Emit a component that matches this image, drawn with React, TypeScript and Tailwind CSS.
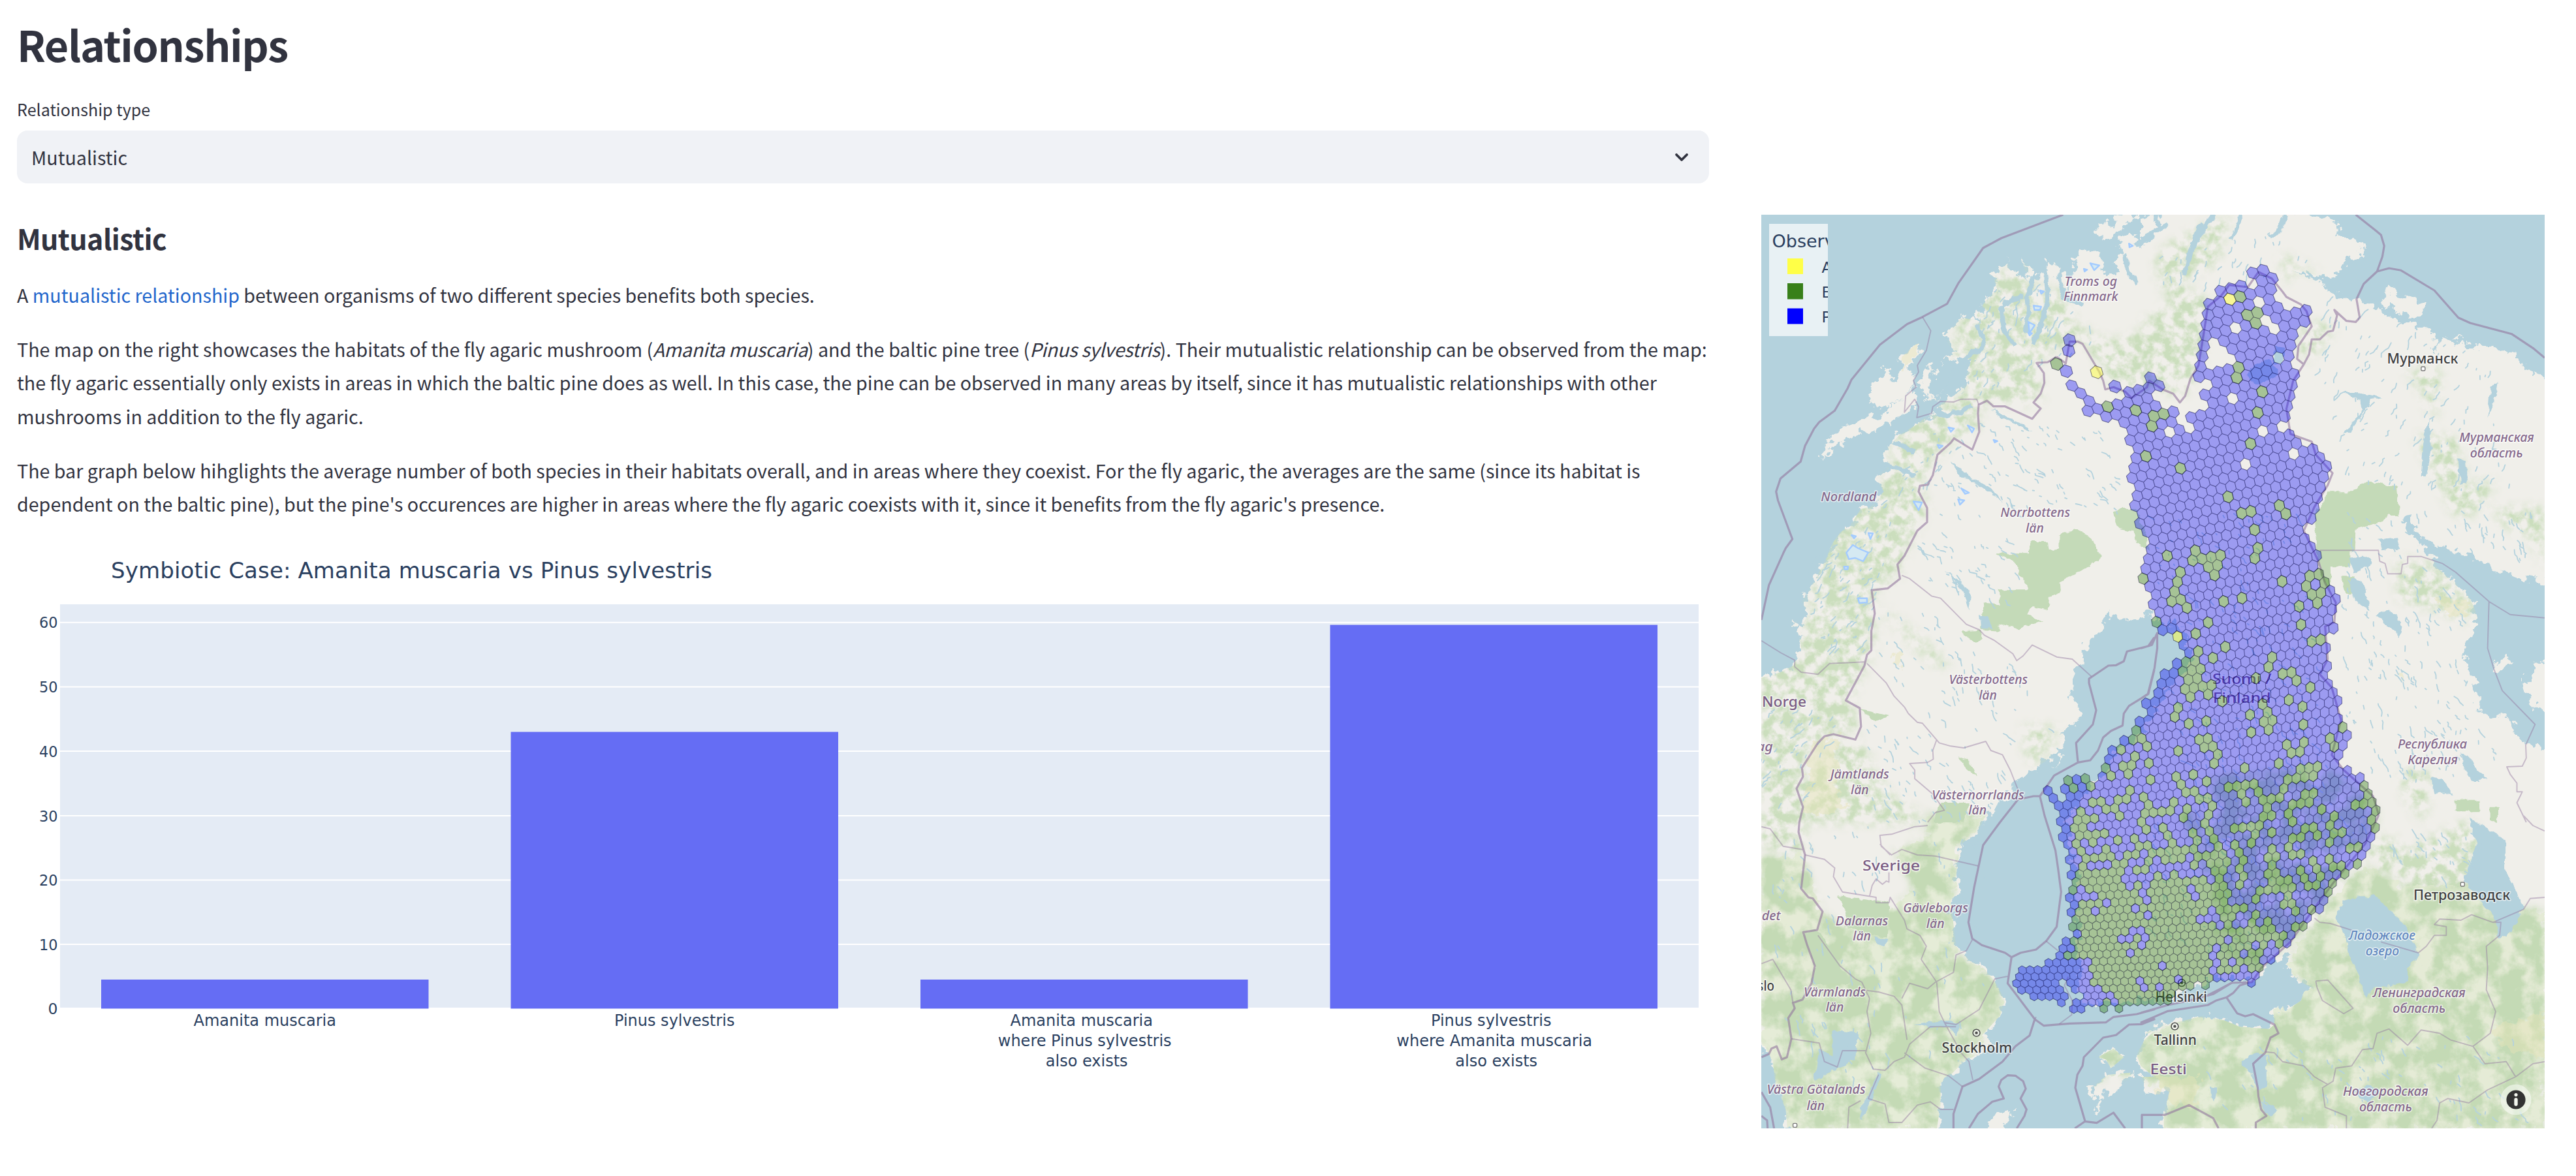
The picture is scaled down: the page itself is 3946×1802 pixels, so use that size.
import React from "react";

/* ---------- Map geometry helpers ---------- */

type Pt = [number, number];

// The map is digitised on six sheets; every sheet has its own origin and scale.
const SHEETS: Record<string, [number, number, number]> = {
  A: [2.529, -18, -19],
  B: [2.45, 582, -19],
  C: [2.529, -18, 451],
  D: [2.45, 582, 451],
  E: [2.529, -18, 921],
  F: [2.45, 582, 921],
};

const at = (sheet: string, x: number, y: number): Pt => {
  const [s, ox, oy] = SHEETS[sheet];
  return [x / s + ox, y / 3 + oy];
};

// "A 10,20 30,40 B 5,6" -> points in map space
function trace(src: string): Pt[] {
  const out: Pt[] = [];
  let sheet = "A";
  for (const t of src.trim().split(/\s+/)) {
    if (SHEETS[t]) sheet = t;
    else {
      const [x, y] = t.split(",").map(Number);
      out.push(at(sheet, x, y));
    }
  }
  return out;
}

const line = (src: string) =>
  "M" + trace(src).map((p) => p[0].toFixed(1) + " " + p[1].toFixed(1)).join("L");
const area = (src: string) => line(src) + "Z";

function inside(p: Pt, poly: Pt[]) {
  let r = false;
  for (let i = 0, j = poly.length - 1; i < poly.length; j = i++) {
    const [xi, yi] = poly[i];
    const [xj, yj] = poly[j];
    if (yi > p[1] !== yj > p[1] && p[0] < ((xj - xi) * (p[1] - yi)) / (yj - yi) + xi) r = !r;
  }
  return r;
}

function rng(seed: number) {
  let s = seed;
  return () => {
    s = (s * 1664525 + 1013904223) % 4294967296;
    return s / 4294967296;
  };
}

/* ---------- Coastlines ---------- */

const MAINLAND = area(`B 630,40 630,57 700,80 750,110 740,150 790,150 830,200 830,250 780,265 750,300 730,340 670,345 640,330 560,305 600,330 650,355 690,380 700,410 740,430 770,420 800,445 850,460 900,490 910,520 950,530 1000,560 1060,575 1098,600 1100,690 1112,690 1110,640 1140,640 1200,655 1300,665 1380,680 1430,740 1480,790 1540,830
D 1560,345 1514,335 1400,310 1320,280 1250,220 1170,190 1110,180 1050,120 1000,40 975,30 1000,100 1040,150 1090,210 1110,270 1160,320 1220,380 1245,440 1265,500 1245,560 1215,620 1220,700 1245,760 1260,860 1255,910 1310,960 1370,950 1400,1000 1420,1060 1514,1100 1560,1110
F 1560,1480 85,1480 85,1370 105,1270 80,1250 70,1280 20,1280 0,1200 E 1568,1200 1515,1150 1500,1100 1530,1030 1568,990
F 0,1010 60,960 130,950 230,920 310,940 370,970 480,980 500,960 495,890 530,870 540,900 600,850 610,810 640,790 590,760 545,700 550,640 490,660 450,720 420,760 300,740 200,780 100,830 0,840
E 1420,860 1300,860 1280,780 1270,740 1290,700 1270,620 1280,540 1260,450 1280,300 1260,200 1240,100 1230,0
C 1230,1430 1260,1380 1310,1280 1370,1230 1410,1130 1490,1060 1568,950 D 60,920 120,800 190,700 180,620 150,540 60,500 20,480
C 1560,480 1480,500 1440,510 1380,480 1370,560 1300,610 1290,700 1260,760 1240,840 1280,920 1260,980 1220,1020 1200,1100 1160,1150 1080,1210 1030,1240 1000,1320 930,1400
E 910,10 880,80 820,130 810,200 800,280 810,350 780,400 790,500 800,600 860,670 900,690 950,760 990,850 970,920 900,1010 950,1040 880,1100 830,1130 780,1190 740,1230 740,1330 720,1480 150,1480 140,1350 100,1230 90,1130 60,1060 0,1040
C 0,780 46,775 100,760 170,720 200,640 190,560 230,480 200,430 240,350 270,290 300,220 320,160 350,110 400,60 430,0
A 470,1400 520,1330 490,1270 540,1210 520,1150 580,1070 650,1020 680,990 750,960 730,940 760,910 800,880 830,840 860,720 740,730 790,690 750,610 780,580 820,530 870,540 900,560 880,520 910,460 960,400 940,330 1000,270 1010,310 1050,340 1090,345 1120,340 1150,340 1200,340 1240,330 1300,310 1370,330 1440,320 1400,270 1450,250 1490,200 1530,190 1568,140 B 0,130 60,120 80,60 80,40`);

const ISLANDS = [
  "A 278,1190 300,1120 360,1030 440,1000 520,970 560,930 600,900 640,850 650,920 600,980 540,1010 490,1050 430,1060 380,1080 330,1120",
  "A 460,900 480,840 540,760 550,830 590,780 630,770 640,840 600,900 540,940 490,940",
  "A 660,635 655,700 620,770 580,790 590,710",
  "A 670,770 705,740 720,790 690,880 720,900 760,870 700,920 660,850",
  "A 1340,100 1400,110 1420,65 1450,57 1500,57 1450,110 1400,160 1350,160",
  "A 1525,65 1568,60 1568,150 1535,140",
  "A 1430,180 1480,145 1520,180 1500,240 1460,250",
  "A 1250,270 1300,215 1370,260 1360,330 1270,320",
  "A 1150,280 1195,275 1195,340 1150,345",
  "A 1050,260 1110,320 1090,345 1070,320",
  "B 0,70 40,62 60,110 40,170 0,150",
  "B 905,440 930,385 1000,440 1060,470 1055,530 1010,530 950,500 930,480 910,480",
  "B 1155,625 1175,605 1205,630",
  "D 1540,690 1480,700 1470,750 1440,780 1450,850 1480,900 1514,950 1540,960",
  "D 1330,700 1390,690 1360,750 1330,740",
  "E 1320,1250 1390,1190 1490,1180 1430,1260 1335,1300",
  "E 1350,1110 1410,1070 1450,1110 1400,1160 1380,1120",
  "E 1340,1360 1350,1300 1365,1310 1350,1370",
  "E 910,1480 950,1380 1025,1355 970,1480",
  "C 150,530 180,515 190,540 165,550",
  "C 1195,1180 1200,1120 1212,1130",
].map(area).join("");

const LAKES = [
  "E 320,990 420,1000 410,1120 340,1160 250,1220 270,1070 320,1110",
  "E 500,1180 515,1185 470,1310 435,1400 430,1340 465,1270",
  "F 760,390 820,370 880,370 940,440 1000,520 1040,640 1000,700 1005,760 930,780 870,790 840,840 820,740 780,640 770,560 730,470",
  "F 1230,10 1300,60 1365,110 1365,250 1400,330 1435,420 1390,530 1340,570 1330,480 1270,380 1210,300 1240,200 1260,130",
  "F 375,1130 430,1085 470,1100 470,1240 440,1260 410,1180",
  "F 450,1310 510,1350 490,1385 465,1360",
  "F 800,1260 860,1240 900,1260 860,1310 820,1300",
  "F 260,1245 285,1250 275,1320 262,1290",
  "D 880,490 930,460 980,530 970,590 910,520",
  "D 790,320 830,330 850,430 860,470 810,430 780,370",
  "D 1090,1230 1130,1240 1170,1310 1100,1310",
  "D 1200,1120 1230,1130 1260,1200 1300,1240 1240,1250 1205,1170",
  "B 800,870 880,890 910,900 860,910 840,960 780,1060 760,1060 830,960 820,910 760,870",
  "B 1060,1090 1080,1000 1090,1130 1070,1260 1050,1260",
  "B 1190,1180 1220,1190 1225,1290 1195,1290",
  "B 1310,850 1340,820 1330,890 1300,990 1305,900",
  "B 500,660 540,665 530,750 495,740",
  "B 410,760 480,720 520,790 440,840 395,800",
  "C 760,280 830,350 860,400 850,460 830,380",
  "A 780,1190 850,1260 930,1310 980,1380 900,1310 810,1250",
  "A 940,950 1000,990 1080,1030 1090,1050 1030,1020 970,990",
  "C 890,490 930,500 940,550 900,550",
  "D 780,230 850,220 870,250 800,290",
  "D 890,140 960,130 970,180 900,190",
  "E 480,560 540,570 520,600 490,590",
  "E 640,960 760,940 820,960 800,1010 770,970 690,970",
].map(area).join("");

const FJORDS = [
  "A 1100,340 1075,440 1080,520 1070,600",
  "A 1150,330 1155,450 1130,560 1100,650",
  "A 975,470 985,590 1030,660",
  "A 720,960 760,985 820,960 860,930",
  "A 760,820 860,690 900,680",
  "A 980,470 1060,430",
  "A 880,560 910,640 890,690",
  "A 1200,330 1220,440 1290,470",
  "A 1450,240 1470,330 1500,370",
  "B 270,60 220,150 190,210 165,320",
  "B 375,60 340,170",
  "B 540,60 520,130 480,160",
  "B 225,100 190,200 160,330",
  "A 1490,200 1568,150",
  "B 100,100 0,170",
  "A 500,1200 600,1230 640,1260",
  "A 560,1100 640,1150",
].map(line).join("");

const FORESTS = [
  "C 955,205 1085,205 1085,150 1155,150 1160,190 1200,185 1200,115 1270,95 1320,130 1365,215 1310,270 1200,335 1205,385 1160,405 1158,465 1100,450 1070,480 1140,520 1040,550 960,530 975,560 895,555 905,430 970,440 965,370 1075,370 1050,300 1030,250",
  "C 820,565 895,560 900,590 880,615 830,580",
  "C 810,1130 850,1160 880,1225 840,1200",
  "C 740,1350 850,1350 830,1440 710,1440",
  "C 430,920 540,950 490,975",
  "C 1408,20 1430,0 1500,0 1540,130 1545,190 1500,150 1490,100 1430,90",
  "B 700,1330 790,1330 850,1280 960,1310 970,1440 660,1440",
  "D 650,0 960,0 900,60 805,90 800,190 785,195 785,265 710,265 712,380 690,340 660,240",
  "D 750,310 800,310 800,380 770,390",
  "E 212,535 262,525 310,600 350,700 410,770 240,775 253,690",
  "E 345,370 540,400 530,560 440,540 370,510 380,440",
  "D 1180,1340 1270,1340 1270,1390 1180,1390",
  "D 1310,1370 1340,1370 1340,1435 1310,1435",
].map(area).join("");

// Mottled woodland, light density
const WOODS_LIGHT = [
  "A 950,340 1050,300 1100,400 1200,400 1230,480 1260,560 1380,640 1568,600 1568,860 1430,860 1330,700 1270,620 1150,700 1110,740 1130,920 900,920 880,1050 800,1080 700,1200 660,1300 690,1420 420,1440 560,1200 540,1100 700,960 860,860 780,680 820,540",
  "C 250,0 680,0 600,200 570,310 480,370 480,640 420,800 380,880 430,1020 300,1030 200,1180 200,1440 46,1440 46,780 190,650 260,300",
  "B 60,250 130,180 250,100 330,60 280,280 180,330 120,480 60,330",
  "B 150,400 250,440 230,700 160,880 60,860 0,860 0,560 100,480",
  "B 530,240 600,290 680,320 570,310 540,380",
  "B 620,560 710,560 720,590 620,730 590,680",
  "B 1030,1080 1180,1080 1220,1300 1330,1280 1240,1440 1180,1440",
  "B 990,770 1120,770 1100,1000 1050,860",
  "C 500,450 620,550 780,720 730,720 640,630",
  "C 340,1060 430,1080 530,1300 700,1440 193,1440 190,1280",
  "C 1060,1000 1200,1010 1130,1160 1080,1160",
  "D 960,230 1100,260 1240,420 1240,520 1130,470 970,420",
  "D 980,1210 1080,1190 1060,1440 990,1330",
  "D 1320,0 1514,0 1514,260 1460,130 1350,60",
  "E 46,0 200,0 215,180 46,140",
  "F 850,100 960,110 1000,250 880,260",
  "F 960,180 1240,20 1300,330 1240,400 980,400",
].map(area).join("");

// Mottled woodland, heavy density
const WOODS_HEAVY = [
  "E 690,0 920,0 800,140 800,280 780,400 800,640 960,760 980,920 900,1010 860,1110 740,1230 730,1437 150,1437 46,1050 46,200 200,180 280,440 360,520 560,420 640,330 560,160 690,100",
  "E 1320,1250 1390,1190 1480,1190 1450,1110 1410,1070 1350,1110 1390,1160",
  "F 0,1010 230,920 480,980 500,890 640,790 545,700 640,500 780,300 850,240 1000,330 1210,320 1300,400 1514,440 1514,1437 85,1437 100,1260 0,1200",
  "E 1500,1100 1568,1000 1568,1190",
].map(area).join("");

// Woodland below the observation grid
const WOODS_FINLAND = [
  "D 250,1230 700,1180 880,1380 870,1440 300,1440",
  "F 150,0 890,0 720,340 560,580 440,700 300,600 250,300",
].map(area).join("");

const FARMLAND = [
  "C 240,1070 345,1040 345,1350 400,1360 310,1400 205,1390",
  "C 550,670 585,670 585,730 555,710",
  "A 590,700 650,640 650,700 590,790",
  "D 960,740 990,750 980,800",
  "D 1120,400 1230,430 1230,510 1150,490",
  "F 1300,980 1514,900 1514,1120 1400,1090",
  "F 60,1200 220,1200 200,1340 60,1300",
].map(area).join("");

const GLACIERS = [
  "C 375,200 400,165 420,180 460,200 440,240 410,225 385,230",
  "C 395,120 412,125 405,135", "C 460,110 478,112 468,138", "C 420,410 455,410 455,430 425,432",
  "C 366,265 382,265 380,277 368,277",
  "A 1080,550 1105,565 1085,600", "A 1100,475 1130,480 1125,495 1104,495", "A 1320,280 1355,290 1335,312",
  "A 1470,190 1485,200 1472,207", "A 1295,306 1308,310 1298,318", "A 635,1375 668,1380 655,1415",
  "A 845,1025 870,1040 862,1058", "A 770,1035 792,1040 780,1055", "A 808,1365 832,1370 815,1390",
  "A 820,1315 850,1335 835,1340", "A 728,1115 748,1120 735,1130", "A 1125,405 1140,410 1130,420",
  "A 1080,598 1094,602 1085,612", "A 945,1092 960,1098 950,1104",
].map(area).join("");

const BORDERS_WIDE = [
  "A 1215,57 1080,118 975,165 905,210 810,370 765,467 670,527 610,560 505,655 395,815 380,855 330,958 270,1010 250,1040 215,1120 198,1192 120,1270 103,1330 110,1370 132,1440 C 166,138 140,180 130,205 75,350 46,510",
  "A 1190,710 1155,735 1112,738 1140,785 1142,830 1128,880 1100,920 1128,948 1095,995 990,938 945,938 920,912 888,930 885,970 890,1055 863,1137 792,1085 780,1105 728,1160 710,1255 690,1298 660,1303 655,1330 688,1405 C 688,60 650,100 600,215 573,255 583,320 535,365 473,373 485,480 472,560 472,650 455,670 445,720 373,880 427,915 432,1000 410,1060 325,1035 290,1045 265,1075 203,1190 207,1230 182,1285 207,1370 193,1440 E 190,75 215,180 200,335 228,375 245,380 283,440 262,525 208,535 222,590 253,690 240,770 205,845 168,860 175,885 150,930 162,1025 145,1110 125,1120 105,1060 85,1070 75,1095 46,1110",
  "A 1190,710 1225,740 1240,640 1270,640 1290,650 1355,780 1370,820 1378,860 1410,850 1455,870 1480,900 1540,850 B 30,820 80,860 120,880 145,920 165,890 185,810 215,750 235,600 250,480 300,430 330,380 400,390 440,320 490,350 530,410 545,435 600,470 620,500 640,570 590,660 585,720 610,745 630,700 640,630 670,630 700,595 720,590 735,520 725,495 770,545 805,550 820,530 808,445 835,375 885,318 905,250 912,200 900,150 880,130 805,57",
  "B 885,318 930,303 975,313 1100,405 1190,530 1235,555 1390,605 1470,670 1514,715",
  "B 610,745 570,820 545,950 560,1065 640,1100 655,1160 718,1245 700,1300 650,1400 D 610,100 665,240 690,340 730,430 725,520 690,540 700,690 670,760 715,820 750,970 715,1130 760,1200 870,1320 890,1400 F 890,0 840,130 720,310 640,440 560,580 450,700 415,765 340,768 270,820 180,850",
  "C 1568,590 1545,630 1462,655 1450,700 1420,718 1390,720 1315,780 1315,800 1343,925 1330,990 1265,1075 1272,1165 1180,1225 1125,1320 1100,1320 1040,1335 970,1440 E 905,135 870,330 848,490 863,565 900,595 990,630 1015,650 1050,630 1110,615 1150,575 1190,510 1207,350 1195,240 1185,160 1143,0 C 1125,1320",
  "C 1272,1165 1320,1155 1350,1110 1370,1050 1400,1020 1445,995 1450,940 1470,905 1545,850 1568,740",
  "D 0,870 25,850 50,730 60,640 60,570 40,625 0,640",
  "E 1015,650 1000,770 1105,935 1140,965 1240,955 1380,950 1410,925 1500,912 1568,890 F 0,905 100,870 200,845",
  "E 1105,935 1085,1010 1030,1060 980,1130 890,1210 825,1245 790,1370 790,1437",
  "E 850,1437 885,1370 940,1315 985,1300 965,1245 975,1215 1000,1193 1030,1195 1060,1220 1070,1255 1050,1300 1073,1350 1065,1380 1035,1437",
  "E 1260,1437 1300,1405 1345,1412 1410,1365 1455,1437",
  "E 1300,1405 1262,1250 1270,1190 1290,1150 1295,1110 1370,1020 1420,1008 1470,960 1520,958 1568,935 F 0,950 100,898 250,870 280,850 320,835 360,908 390,922 420,912 500,960 515,1000 485,1020 465,1090 420,1140 437,1250 440,1290 450,1350 470,1380 430,1410 430,1437",
  "F 0,1375 90,1375 120,1360 180,1330 240,1370 270,1390 290,1437",
  "F 250,825 290,800 340,768", "F 320,835 345,815 370,780 410,765",
  "E 46,1270 80,1340 95,1437", "E 46,1380 68,1400 70,1437",
  "E 1520,1437 1520,1375 1568,1375",
].map(line).join("");

const BORDERS_THIN = [
  "A 670,527 702,590 685,680 650,750 655,780 635,820 645,850 605,890 600,965 640,905 655,940 648,990 705,970 710,940 740,915 790,918 820,905 880,905 888,930",
  "C 46,605 120,660 175,695 175,725 200,750 265,760 310,710 445,703",
  "C 590,305 620,320 705,400 740,410 840,530 890,555 910,580 950,605 1020,665 1035,697 1060,675 1095,625 1190,680 1250,690 1325,770",
  "C 455,710 505,770 530,800 560,860 600,910 615,940 650,980 670,985 735,1075 780,1090 830,1098 915,1068 935,1110 980,1130 1010,1200 1040,1290",
  "C 725,1060 710,1110 712,1150 690,1165 620,1170 640,1200 640,1240 710,1310 755,1385 720,1395 690,1440",
  "E 690,45 640,50 550,85 505,90 510,140 550,180 590,155 650,180 720,185 810,210 885,230",
  "E 215,180 290,200 330,240 325,280 360,350 490,375 490,400 540,400 545,375 600,480 610,520 660,550 685,600 665,660 725,765 735,900 755,950 820,1090 850,1130 865,1215",
  "E 465,370 475,320 490,290 515,315 530,300 540,305 540,260",
  "E 46,50 80,60 130,140 205,155",
  "E 545,180 505,130",
  "E 265,550 350,690 410,750 435,765 465,840 455,900 470,1000 450,1090 480,1165 525,1170 560,1130 600,1110 620,1050 700,970 800,970",
  "E 435,800 500,810 560,830 590,870 610,1030",
  "E 590,840 620,770 690,795 720,765 790,720 800,640 840,620 863,570",
  "E 162,1025 270,1045 290,1130 340,1155 360,1080 450,1080",
  "E 600,1090 680,1160 770,1195 825,1245",
  "E 500,1190 460,1300 525,1325 540,1410 590,1410 650,1330 700,1315 740,1350 790,1350",
  "E 380,1437 385,1340 430,1310", "E 755,950 800,960 890,890 950,750 1000,738",
  "E 46,680 90,660 130,740 160,800 168,860",
  "E 1148,575 1195,620", "E 1105,935 1110,925", "E 1200,957 1248,915 1250,850 1220,780 1235,740",
  "F 650,470 670,490 710,495 800,530", "F 900,580 1040,630 1070,600 1100,550 1145,550 1145,510 1100,500 1120,475 1200,480 1240,455 1320,490 1435,430 1460,380 1514,375",
  "F 1320,490 1350,490 1345,550 1295,600 1300,700 1295,800 1330,900 1310,1000 1245,1060 1160,1030 1120,1000 1050,985 1000,1055 930,980 885,1000 870,1070 830,1075 790,1150 730,1160 720,1220 680,1250 690,1340 770,1380 770,1437",
  "F 465,1085 500,1090 530,1130 610,1150 650,1200 700,1235",
  "F 1245,1060 1290,1140 1370,1130 1405,1200 1370,1220 1300,1260 1230,1320 1150,1300 1120,1320 1110,1400 1090,1437",
  "F 1405,1200 1470,1140 1514,1130",
  "F 655,760 700,755 795,885 760,910 680,850 660,790 655,760",
  "D 670,190 890,190 895,240 915,250 925,298 975,298 980,255 1000,250 1000,218 1050,218 1130,250 1180,290 1305,425 1385,485 1514,500",
  "D 1305,425 1300,640 1325,740 1355,835 1478,990 1443,1085 1445,1145 1430,1182 1372,1185 1385,1220 1410,1260 1410,1300 1430,1300 1410,1350 1445,1440",
  "F 1435,0 1470,45 1514,70",
].map(line).join("");

/* ---------- Small lakes scattered over the land ---------- */

const LAKE_ZONES: [string, number, number][] = [
  ["A 900,1000 1400,1050 1450,1440 700,1440 720,1200", 110, 0.75],
  ["C 620,80 1000,100 1040,300 960,500 700,350", 70, 0.8],
  ["C 500,400 850,540 1000,700 1180,1000 1000,1100 700,1000 480,650", 120, 1],
  ["C 430,980 700,1000 1000,1200 900,1440 500,1440 400,1100", 80, 1.05],
  ["C 250,150 560,50 440,700 250,600", 110, 2.3],
  ["A 700,1050 860,1150 600,1400 500,1400", 60, 2.2],
  ["A 950,380 1300,350 1350,650 900,900 760,820", 100, 2],
  ["B 700,400 1060,600 1300,700 1400,1400 700,1300 650,800", 190, 2.1],
  ["B 0,250 500,100 700,260 500,330 100,440", 60, 1.9],
  ["D 760,10 960,10 1200,420 1240,900 1400,1200 900,1300 760,950 750,400", 260, 1.15],
  ["D 1000,0 1500,0 1500,260 1200,180", 60, 1.2],
  ["D 20,20 600,20 700,1100 850,1400 200,1440 100,1000", 260, 0.9],
  ["C 46,900 400,900 200,1400 46,1400", 50, 2.3],
  ["E 60,50 900,50 950,900 400,1300 100,1000", 130, 1.3],
  ["F 950,50 1300,50 1250,400 850,150", 60, 1],
  ["F 0,0 850,0 450,650 0,600", 200, 0.9],
  ["F 150,1000 1500,1000 1500,1400 300,1400", 70, 1.1],
];

const SMALL_LAKES = (() => {
  const r = rng(41);
  let d = "";
  for (const [src, n, ang] of LAKE_ZONES) {
    const poly = trace(src);
    const xs = poly.map((p) => p[0]);
    const ys = poly.map((p) => p[1]);
    const x0 = Math.min(...xs), x1 = Math.max(...xs), y0 = Math.min(...ys), y1 = Math.max(...ys);
    for (let k = 0; k < n; k++) {
      let x = x0 + r() * (x1 - x0);
      let y = y0 + r() * (y1 - y0);
      const steps = 1 + Math.floor(r() * r() * 6);
      if (!inside([x, y], poly)) continue;
      d += `M${x.toFixed(1)} ${y.toFixed(1)}`;
      for (let q = 0; q < steps; q++) {
        const a = ang + (r() - 0.5) * 1.3;
        const l = 2 + r() * 4;
        x += Math.cos(a) * l;
        y += Math.sin(a) * l;
        d += `L${x.toFixed(1)} ${y.toFixed(1)}`;
      }
    }
  }
  return d;
})();

/* ---------- Hexagon grid of observations ---------- */

const RANGE = trace(`B 400,315 425,300 495,300 495,350 485,380 520,400 515,445 430,455 420,480 450,495 515,475 545,500 550,530 575,520 580,480 605,455 630,490 615,560 570,565 565,600 595,625 580,700 575,740 607,760 595,810 580,850 575,900 560,960 545,1000 525,1015 525,1050 575,1045 600,1110 640,1120 660,1165 700,1160 718,1185 700,1230 715,1260 695,1320 675,1370 660,1400 655,1440
D 640,50 620,100 645,150 678,200 665,260 690,320 712,370 730,410 747,450 730,500 747,545 720,570 690,590 712,620 700,660 710,710 700,750 700,790 730,820 745,870 730,910 745,955 795,965 795,990 775,1010 795,1060 775,1100 755,1150 745,1190 790,1200 795,1230 838,1235 840,1270 870,1300 885,1350 905,1400 885,1440
F 905,70 870,90 850,130 835,160 850,190 820,210 800,240 785,270 740,300 720,350 705,390 690,430 645,460 630,500 600,520 570,580 515,620 510,660 470,690 450,740 440,775 415,785 400,750 300,757 270,775 265,800 240,800 230,770 210,775 200,805 120,815 115,850 60,860 10,875
E 1568,870 1550,865 1420,895 1400,860 1380,890 1345,890 1340,865 1310,865 1310,890 1250,890 1250,860 1290,850 1290,835 1235,800 1230,770 1255,750 1240,735 1215,760 1205,800 1230,830 1230,860 1200,860 1195,835 1085,835 1075,810 1035,805 1018,765 1030,720 1050,685 1140,685 1170,655 1190,625 1205,580 1215,545 1245,545 1240,510 1230,490 1245,450 1250,410 1235,390 1245,340 1255,300 1240,270 1250,240 1230,210 1235,180 1225,130 1205,100 1215,60 1198,30
C 1200,1430 1205,1390 1180,1350 1150,1310 1155,1285 1185,1300 1210,1350 1235,1350 1235,1320 1212,1290 1225,1235 1300,1210 1340,1245 1350,1200 1370,1170 1385,1115 1415,1105 1420,1065 1475,1055 1495,1010 1510,990 1485,950 1500,930 1530,955 1545,920 1535,890 1550,880 1568,890
D 20,880 45,890 70,870 60,840 80,790 90,750 110,740 100,715 120,700 150,720 150,660 130,620 125,560 90,555 55,560 40,545 60,510 40,460 15,420 30,385 10,345 0,310
C 1510,300 1530,250 1540,200 1535,150 1510,100 1510,30 A 1500,1430 1480,1390 1500,1340 1475,1290 1490,1240 1460,1210 1480,1170 1470,1120 1440,1090 1450,1050 1415,1010 1380,985 1350,965 1300,970 1320,945 1310,910 1275,890 1235,850 1240,830 1270,835 1310,870 1350,910 1385,920 1440,900 1470,890 1470,850 1510,850 1520,790 1560,790
B 45,800 80,840 60,870 30,870 30,900 60,920 65,945 100,930 135,945 130,1000 160,1030 165,1045 200,1035 195,1010 165,990 170,960 225,945 255,940 250,900 220,885 235,855 275,850 270,820 230,825 195,800 205,740 220,690 225,630 240,560 250,500 255,440 290,440 305,385 370,370 395,400 430,410 435,370 400,360`);

const GAPS = [
  "B 255,690 265,640 290,625 305,630 315,655 340,670 335,735 300,755 265,765 250,730",
  "B 445,545 525,530 525,590 510,620 480,620",
  "B 325,575 390,565 395,600 330,610",
  "B 497,670 540,665 530,730 500,745",
].map(trace);

const BARE = trace("B 309,505 355,897 465,1047 562,1165 375,1200 102,1047");
const YELLOW = trace("B 319,457 D 125,603");
const GREEN = trace(`B 361,447 389,533 430,522 420,570 392,710 383,758 374,805 407,842 439,880 420,968 408,1105 75,967 36,980 30,1025 15,1157 134,1210 82,1268 324,1342 508,1393 527,1428 400,1413 365,1420
A 1403,937 1480,957 1529,1155
D 365,10 400,10 383,45 417,45 527,22 403,87 437,82 204,87 225,123 258,117 208,172 104,195 137,185 440,165 425,210 193,215 230,210 264,205 297,195 213,252 248,245 282,238 142,270 95,320 128,312 285,322 515,322 625,303 658,300 604,350 674,345 113,360 146,350 133,397 625,388 658,385 118,440 152,436 308,443 376,430 604,433 675,425 170,470 50,460 605,517 243,537 55,540 195,590 640,595 675,590 433,625 332,643 520,653 283,690 200,665 183,705 215,705 503,693 117,725 487,735 170,745 203,745 235,742 187,785 220,780 540,768 573,765 437,785 590,803 640,840 175,825 207,825 238,820 270,815 190,870 258,858 305,888 557,888 457,905 610,920 145,917 130,960 474,940 408,948 460,980 490,975 245,978 181,990 608,1000 477,1020 410,1028 758,1024 218,1060 250,1055 235,1095 267,1090 710,1070 608,1080 544,1087 722,1105 592,1120 560,1123 140,1115 283,1125 270,1168 512,1165 10,1065 27,1100 5,305
C 1505,1028 1495,1070 1527,1060 1545,1100 1450,1120 1503,1147 1437,1165`);

// Lattice position with the projection's stretch expressed as a cubic
const P = (i: number, j: number): Pt => [
  670.7 + 13.3 * i + 7.8 * j - 0.05 * i * j - 0.057 * j * j + 0.00036 * j * j * j,
  804.3 - 1.8 * i + 12.2 * j - 0.01 * i * i + 0.03 * i * j - 0.0056 * j * j - 0.000264 * j * j * j,
];
const stepI = (i: number, j: number): Pt => [13.3 - 0.05 * j, -1.8 - 0.02 * i + 0.03 * j];
const stepJ = (i: number, j: number): Pt => [
  7.8 - 0.05 * i - 0.114 * j + 0.00108 * j * j,
  12.2 + 0.03 * i - 0.0112 * j - 0.000792 * j * j,
];

function hexPath(c: Pt, a: Pt, b: Pt) {
  const v: Pt[] = [
    [(a[0] + b[0]) / 3, (a[1] + b[1]) / 3],
    [(2 * b[0] - a[0]) / 3, (2 * b[1] - a[1]) / 3],
    [(b[0] - 2 * a[0]) / 3, (b[1] - 2 * a[1]) / 3],
  ];
  const all = [...v, ...v.map(([x, y]) => [-x, -y] as Pt)];
  return "M" + all.map(([x, y]) => (c[0] + x).toFixed(1) + " " + (c[1] + y).toFixed(1)).join("L") + "Z";
}

const near = (c: Pt, list: Pt[], d = 7.4) =>
  list.some((p) => Math.hypot(p[0] - c[0], p[1] - c[1]) < d);

const CELLS = (() => {
  const r = rng(977);
  const out = { blue: "", green: "", yellow: "" };
  for (let j = -75; j <= 50; j++) {
    for (let i = -70; i <= 90; i++) {
      const c = P(i, j);
      if (c[0] < 350 || c[0] > 980 || c[1] < 60 || c[1] > 1230) continue;
      if (!inside(c, RANGE)) continue;
      const roll = r();
      if (GAPS.some((g) => inside(c, g)) || near(c, BARE)) continue;
      const [x, y] = c;
      let kind: "blue" | "green" | "yellow" = "blue";
      if (near(c, YELLOW)) kind = "yellow";
      else if (near(c, GREEN)) kind = "green";
      else if (y > 845 || (x < 600 && y > 835)) {
        const wave = Math.sin(x / 23 + y / 31) * Math.cos(y / 19 - x / 41) * 0.16;
        let p = 0.3;
        if (y > 930) p = x > 760 ? 0.38 : 0.44;
        if (y > 1020) p = x > 740 ? 0.42 : 0.78;
        if (y > 1080) p = x > 690 ? 0.6 : 0.93;
        if (x < 520 && y < 1000) p = 0.45;
        if (x < 505 && y > 1143) p = -0.1;
        if (x < 475) p -= 0.3;
        if (y > 1161 && x > 690) p = 0.1;
        if (roll < p + wave) kind = "green";
      }
      out[kind] += hexPath(c, stepI(i, j), stepJ(i, j));
    }
  }
  const a: Pt = [17, -3], b: Pt = [12.5, 13.5];
  for (const p of trace("A 1240,634 1236,682 1227,776 1416,847")) out.blue += hexPath(p, a, b);
  for (const p of trace("A 1190,743")) out.green += hexPath(p, a, b);
  for (const p of trace("A 1345,781")) out.yellow += hexPath(p, a, b);
  return out;
})();

/* ---------- Map labels ---------- */

type Label = [string, string, number, number, number, ("region" | "country" | "city" | "lake")?];

const LABELS: Label[] = [
  ["Troms og", "A", 1322, 383, 204],
  ["Finnmark", "A", 1322, 453, 211],
  ["Nordland", "A", 384, 1374, 215],
  ["Norrbottens", "C", 1107, 35, 270],
  ["län", "C", 1105, 107, 70],
  ["Västerbottens", "C", 925, 805, 305],
  ["län", "C", 923, 877, 70],
  ["Norge", "C", 134, 909, 172, "country"],
  ["Trøndelag", "C", -32, 1113, 245],
  ["Jämtlands", "C", 427, 1238, 228],
  ["län", "C", 427, 1310, 70],
  ["Västernorrlands", "C", 885, 1334, 358],
  ["län", "C", 883, 1405, 70],
  ["Sverige", "E", 549, 252, 223, "country"],
  ["Gävleborgs", "E", 721, 445, 252],
  ["län", "E", 720, 516, 70],
  ["Dalarnas", "E", 435, 503, 203],
  ["län", "E", 435, 573, 70],
  ["Innlandet", "E", 10, 480, 220],
  ["Oslo", "E", 45, 805, 102, "city"],
  ["Värmlands", "E", 330, 830, 240],
  ["län", "E", 330, 900, 70],
  ["Stockholm", "E", 881, 1088, 273, "city"],
  ["Västra Götalands", "E", 258, 1279, 382],
  ["län", "E", 256, 1352, 70],
  ["Eesti", "F", 102, 1187, 138, "country"],
  ["Tallinn", "F", 128, 1053, 160, "city"],
  ["Helsinki", "F", 150, 855, 195, "city"],
  ["Ладожское", "F", 904, 571, 250, "lake"],
  ["озеро", "F", 905, 641, 126, "lake"],
  ["Ленинградская", "F", 1043, 835, 348],
  ["область", "F", 1043, 906, 198],
  ["Новгородская", "F", 917, 1287, 320],
  ["область", "F", 917, 1358, 198],
  ["Петрозаводск", "F", 1203, 388, 363, "city"],
  ["Республика", "D", 1093, 1102, 260],
  ["Карелия", "D", 1094, 1172, 188],
  ["Мурманск", "B", 1056, 740, 267, "city"],
  ["Мурманская", "B", 1334, 1102, 280],
  ["область", "B", 1333, 1173, 198],
  ["Suomi /", "D", 378, 803, 222, "country"],
  ["Finland", "D", 378, 890, 218, "country"],
];

const LABEL_STYLE = {
  region: "fill-[#866a8d] text-[20px] italic font-medium",
  country: "fill-[#7a5c84] text-[22px] font-medium",
  city: "fill-[#3f4041] text-[21.5px] font-medium",
  lake: "fill-[#6489c0] text-[20px] italic font-medium",
};

function MapLabel({ label }: { label: Label }) {
  const [text, sheet, lx, ly, w, kind = "region"] = label;
  const [x, y] = at(sheet, lx, ly);
  return (
    <text
      x={x}
      y={y}
      textAnchor="middle"
      textLength={w / SHEETS[sheet][0]}
      lengthAdjust="spacingAndGlyphs"
      className={LABEL_STYLE[kind]}
      stroke="#ffffff"
      strokeOpacity="0.65"
      strokeWidth="3"
      strokeLinejoin="round"
      paintOrder="stroke"
    >
      {text}
    </text>
  );
}

const CAPITALS = trace("E 879,998 F 126,968 F 152,768");
const TOWNS = trace("E 176,1423 F 1206,315 B 1058,765");

function ObservationMap() {
  return (
    <svg viewBox="0 0 1200 1400" className="block h-[1400px] w-[1200px] font-['Noto_Sans',sans-serif]">
      <defs>
        <filter id="coast" x="-5%" y="-5%" width="110%" height="110%">
          <feTurbulence type="fractalNoise" baseFrequency="0.075" numOctaves="4" seed="4" />
          <feDisplacementMap in="SourceGraphic" scale="27" xChannelSelector="R" yChannelSelector="G" />
          <feGaussianBlur stdDeviation="0.6" />
        </filter>
        <filter id="wobble" x="-5%" y="-5%" width="110%" height="110%">
          <feTurbulence type="fractalNoise" baseFrequency="0.09" numOctaves="2" seed="9" />
          <feDisplacementMap in="SourceGraphic" scale="9" xChannelSelector="R" yChannelSelector="G" />
          <feGaussianBlur stdDeviation="0.5" />
        </filter>
        <filter id="light" x="-5%" y="-5%" width="110%" height="110%" colorInterpolationFilters="sRGB">
          <feGaussianBlur in="SourceAlpha" stdDeviation="9" result="s" />
          <feTurbulence type="fractalNoise" baseFrequency="0.06" numOctaves="5" seed="21" />
          <feColorMatrix values="0 0 0 0 0  0 0 0 0 0  0 0 0 0 0  1 0 0 0 0" result="n" />
          <feComposite in="s" in2="n" operator="arithmetic" k1="3.6" k2="-1.3" k3="0" k4="0" result="m" />
          <feFlood floodColor="#cbdebd" />
          <feComposite in2="m" operator="in" />
        </filter>
        <filter id="heavy" x="-5%" y="-5%" width="110%" height="110%" colorInterpolationFilters="sRGB">
          <feGaussianBlur in="SourceAlpha" stdDeviation="7" result="s" />
          <feTurbulence type="fractalNoise" baseFrequency="0.03" numOctaves="6" seed="33" />
          <feColorMatrix values="0 0 0 0 0  0 0 0 0 0  0 0 0 0 0  1 0 0 0 0" result="n" />
          <feComposite in="s" in2="n" operator="arithmetic" k1="4" k2="-1.35" k3="0" k4="0" result="m" />
          <feFlood floodColor="#c4dab5" />
          <feComposite in2="m" operator="in" />
        </filter>
        <clipPath id="land">
          <path d={MAINLAND + ISLANDS} />
        </clipPath>
        <clipPath id="legendBox">
          <rect x="12" y="14" width="90" height="172" />
        </clipPath>
      </defs>

      <rect width="1200" height="1400" fill="#b4d2dd" />
      <path d={MAINLAND + ISLANDS} fill="#f0efea" filter="url(#coast)" />
      <g clipPath="url(#land)">
        <path d={WOODS_LIGHT} filter="url(#light)" />
        <path d={WOODS_HEAVY} fill="#e3ebd2" opacity="0.8" filter="url(#coast)" />
        <path d={WOODS_HEAVY} filter="url(#heavy)" />
        <path d={WOODS_FINLAND} filter="url(#heavy)" />
        <path d={FORESTS} fill="#c4dab8" filter="url(#wobble)" />
        <path d={FARMLAND} fill="#e6e4b8" opacity="0.45" filter="url(#coast)" />
      </g>
      <path d={LAKES} fill="#b4d2dd" filter="url(#wobble)" />
      <path d={FJORDS} fill="none" stroke="#b4d2dd" strokeWidth="7" filter="url(#wobble)" />
      <path d={SMALL_LAKES} fill="none" stroke="#b4d2dd" strokeWidth="1.8" strokeLinecap="round" strokeLinejoin="round" />
      <path d={GLACIERS} fill="#d5e9f2" stroke="#a3cbff" strokeWidth="2.4" strokeLinejoin="round" />
      <g fill="none" stroke="#93779f" strokeLinejoin="round">
        <path d={BORDERS_WIDE} strokeWidth="3.2" strokeOpacity="0.6" />
        <path d={BORDERS_THIN} strokeWidth="1.9" strokeOpacity="0.45" />
      </g>

      {LABELS.map((l, k) => (
        <MapLabel key={k} label={l} />
      ))}
      {CAPITALS.map(([x, y], k) => (
        <g key={k}>
          <circle cx={x} cy={y} r="5.4" fill="#ffffff" fillOpacity="0.6" stroke="#4d4d4d" strokeWidth="1.6" />
          <circle cx={x} cy={y} r="2.2" fill="#4d4d4d" />
        </g>
      ))}
      {TOWNS.map(([x, y], k) => (
        <rect key={k} x={x - 3} y={y - 3} width="6" height="6" rx="1.5" fill="#ffffff" stroke="#777777" strokeWidth="1.4" />
      ))}

      <g stroke="#101030" strokeOpacity="0.5" strokeWidth="1.05" strokeLinejoin="round">
        <path d={CELLS.blue} fill="#0000ff" fillOpacity="0.35" stroke="#000040" />
        <path d={CELLS.green} fill="#38821a" fillOpacity="0.4" />
        <path d={CELLS.yellow} fill="#ffff40" fillOpacity="0.5" />
      </g>

      <rect x="12" y="14" width="90" height="172" fill="#e8f1f4" />
      <g clipPath="url(#legendBox)" className="fill-[#2a3f5f] font-['DejaVu_Sans',sans-serif]">
        <text x="16.5" y="50" className="text-[27px]">Observations</text>
        <text x="92.5" y="89" className="text-[23px]">Amanita muscaria</text>
        <text x="92.5" y="127" className="text-[23px]">Both</text>
        <text x="92.5" y="165" className="text-[23px]">Pinus sylvestris</text>
      </g>
      <rect x="40" y="67" width="24" height="24" fill="#ffff47" />
      <rect x="40" y="105" width="24" height="24.5" fill="#38801a" />
      <rect x="40" y="143.5" width="24" height="24" fill="#0000ff" />

      <circle cx="1156" cy="1356" r="23.5" fill="#ffffff" fillOpacity="0.5" />
      <circle cx="1156" cy="1356" r="14.6" fill="#333333" />
      <circle cx="1156" cy="1348.6" r="2.6" fill="#f3f6ee" />
      <rect x="1153.3" y="1353.2" width="5.4" height="12.6" rx="2.7" fill="#f3f6ee" />
    </svg>
  );
}

/* ---------- Bar chart ---------- */

const TICKS = [
  [60, 953.8], [50, 1052.5], [40, 1151], [30, 1250], [20, 1348.5], [10, 1447],
];
const BARS = [
  { x: 155, top: 1501, labels: ["Amanita muscaria"] },
  { x: 782.5, top: 1121.5, labels: ["Pinus sylvestris"] },
  { x: 1410, top: 1501, labels: ["Amanita muscaria", "where Pinus sylvestris", "also exists"] },
  { x: 2037.5, top: 957.5, labels: ["Pinus sylvestris", "where Amanita muscaria", "also exists"] },
];

function BarChart() {
  return (
    <svg viewBox="26 828 2592 860" className="block h-[860px] w-[2592px] fill-[#2a3f5f] font-['DejaVu_Sans',sans-serif]">
      <text x="170" y="886" textLength="921" className="text-[34px]">
        Symbiotic Case: Amanita muscaria vs Pinus sylvestris
      </text>
      <rect x="92" y="926" width="2510" height="618" fill="#e4ebf5" />
      {TICKS.map(([n, y]) => (
        <g key={n}>
          <rect x="92" y={y - 1} width="2510" height="2" fill="#ffffff" />
          <text x="88.5" y={y + 8.5} textAnchor="end" textLength="28.5" lengthAdjust="spacingAndGlyphs" className="text-[23.5px]">{n}</text>
        </g>
      ))}
      <text x="88.5" y="1553.5" textAnchor="end" className="text-[23.5px]">0</text>
      {BARS.map((b, k) => (
        <g key={k}>
          <rect x={b.x} y={b.top} width="501.5" height={1545.5 - b.top} fill="#656df4" />
          {b.labels.map((t, q) => (
            <text
              key={q}
              x={b.x + 250.7 + (b.labels.length > 1 ? [-4, 1, 4][q] : 0)}
              y={1572 + q * 30.8}
              textAnchor="middle"
              className="text-[24px]"
            >
              {t}
            </text>
          ))}
        </g>
      ))}
    </svg>
  );
}

/* ---------- Page ---------- */

export default function App() {
  return (
    <div className="flex h-[1802px] w-[3946px] overflow-hidden bg-white pl-[26px] font-['Noto_Sans_CJK_SC',sans-serif] text-[#31333f]">
      <main className="w-[2592px] shrink-0 pt-[27px]">
        <h1 className="h-[80px] text-[64.5px] leading-[80px] font-bold tracking-[-1.35px]">Relationships</h1>
        <div className="mt-[40px] h-[53px] text-[25.07px] leading-[40px]">Relationship type</div>
        <div className="flex h-[81px] items-center justify-between rounded-2xl bg-[#f0f2f6] pr-[28px] pl-[22px] text-[28.65px] leading-[81px]">
          <span>Mutualistic</span>
          <svg viewBox="0 0 28 28" className="h-7 w-7" fill="none" stroke="#31333f" strokeWidth="3.8" strokeLinecap="round" strokeLinejoin="round">
            <path d="M6 10l8 8 8-8" />
          </svg>
        </div>
        <h4 className="mt-[54px] h-[58px] text-[42.97px] leading-[58px] font-bold tracking-[-0.6px]">Mutualistic</h4>
        <div className="mt-[33px] flex flex-col gap-8 text-[28.65px] leading-[51.2px] whitespace-nowrap">
          <p>
            A <a className="text-[#1f66cc]">mutualistic relationship</a> between organisms of two different species benefits both species.
          </p>
          <p>
            The map on the right showcases the habitats of the fly agaric mushroom (<em className="tracking-[-0.27px]">Amanita muscaria</em>) and the baltic pine tree (<em className="tracking-[-0.27px]">Pinus sylvestris</em>). Their mutualistic relationship can be observed from the map:
            <br />
            the fly agaric essentially only exists in areas in which the baltic pine does as well. In this case, the pine can be observed in many areas by itself, since it has mutualistic relationships with other
            <br />
            mushrooms in addition to the fly agaric.
          </p>
          <p>
            The bar graph below hihglights the average number of both species in their habitats overall, and in areas where they coexist. For the fly agaric, the averages are the same (since its habitat is
            <br />
            dependent on the baltic pine), but the pine's occurences are higher in areas where the fly agaric coexists with it, since it benefits from the fly agaric's presence.
          </p>
        </div>
        <div className="mt-[31px]">
          <BarChart />
        </div>
      </main>
      <aside className="mt-[329px] ml-[80px] shrink-0">
        <ObservationMap />
      </aside>
    </div>
  );
}
